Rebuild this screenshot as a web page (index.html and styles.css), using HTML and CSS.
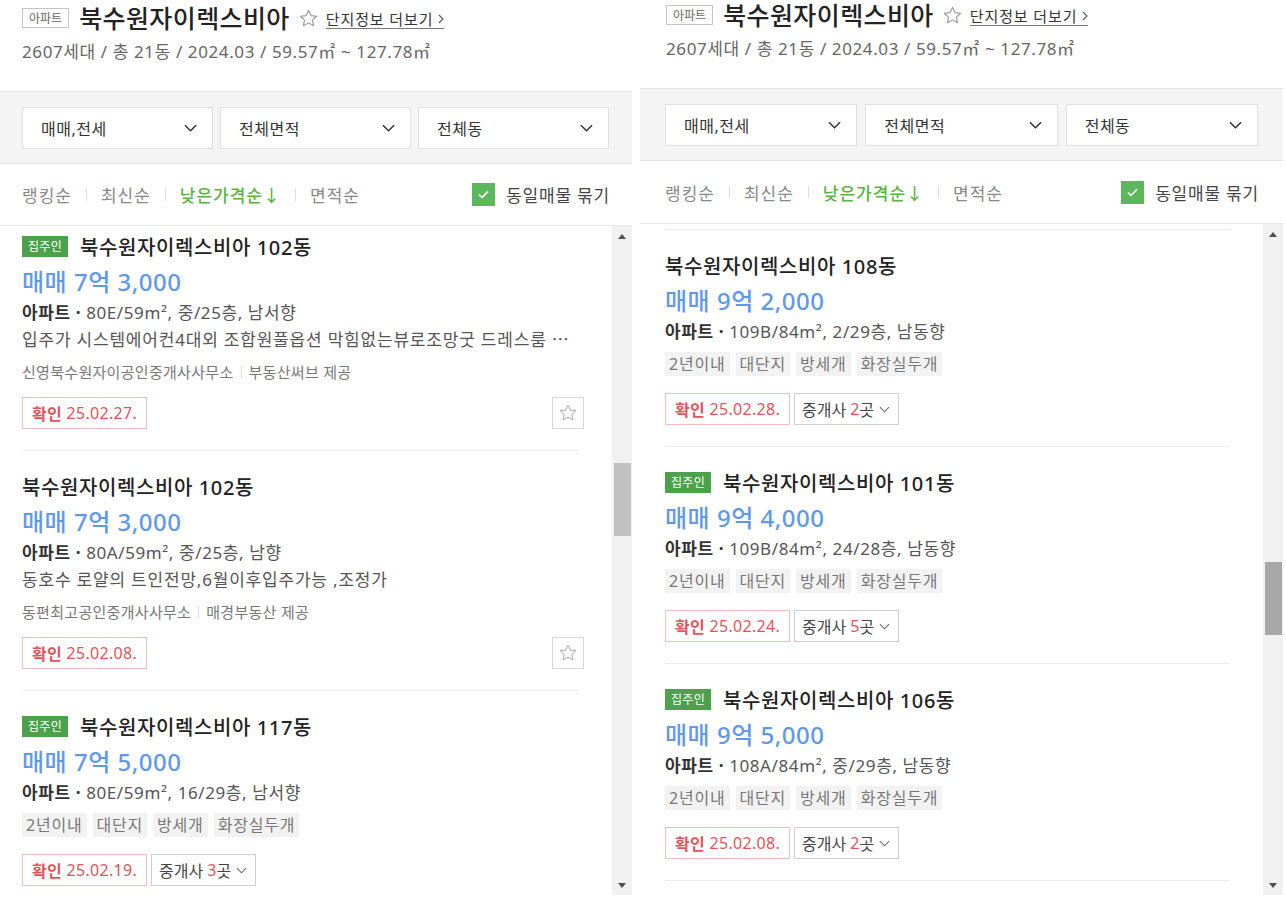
FILE: index.html
```html
<!DOCTYPE html>
<html lang="ko">
<head>
<meta charset="utf-8">
<title>북수원자이렉스비아 매물</title>
<link rel="stylesheet" href="styles.css">
</head>
<body>
<div class="page">

  <section class="panel panel--left">
    <header class="head">
      <div class="head-title">
        <span class="kind">아파트</span>
        <h1 class="name">북수원자이렉스비아</h1>
        <svg class="fav" viewBox="0 0 24 24" width="21" height="21"><polygon points="12,2.8 14.8,8.7 21.3,9.4 16.5,13.8 17.8,20.2 12,17 6.2,20.2 7.5,13.8 2.7,9.4 9.2,8.7" fill="none" stroke="#9a9a9a" stroke-width="1.3" stroke-linejoin="round"/></svg>
        <a class="more" href="#">단지정보 더보기<svg viewBox="0 0 6 10" width="6" height="10"><path d="M1 1l4 4-4 4" fill="none" stroke="#555" stroke-width="1.1"/></svg></a>
      </div>
      <p class="summary">2607세대 / 총 21동 / 2024.03 / 59.57㎡ ~ 127.78㎡</p>
    </header>

    <div class="filters">
      <div class="select"><span>매매,전세</span><svg viewBox="0 0 14 8" width="13" height="8"><path d="M1 1l6 6 6-6" fill="none" stroke="#333" stroke-width="1.6"/></svg></div>
      <div class="select"><span>전체면적</span><svg viewBox="0 0 14 8" width="13" height="8"><path d="M1 1l6 6 6-6" fill="none" stroke="#333" stroke-width="1.6"/></svg></div>
      <div class="select"><span>전체동</span><svg viewBox="0 0 14 8" width="13" height="8"><path d="M1 1l6 6 6-6" fill="none" stroke="#333" stroke-width="1.6"/></svg></div>
    </div>

    <div class="sorts">
      <ul class="sort-list">
        <li>랭킹순</li>
        <li class="sort-sep"></li>
        <li>최신순</li>
        <li class="sort-sep"></li>
        <li class="is-active">낮은가격순↓</li>
        <li class="sort-sep"></li>
        <li>면적순</li>
      </ul>
      <label class="bundle"><span class="check"><svg viewBox="0 0 12 10" width="11" height="9"><path d="M1 5l3.3 3.3L11 1.5" fill="none" stroke="#fff" stroke-width="1.8"/></svg></span>동일매물 묶기</label>
    </div>

    <div class="list-wrap">
      <div class="list">
        <article class="item">
          <div class="item-title"><span class="owner">집주인</span><h2>북수원자이렉스비아 102동</h2></div>
          <div class="price">매매 7억 3,000</div>
          <div class="spec"><strong>아파트 ·</strong> 80E/59m², 중/25층, 남서향</div>
          <p class="desc">입주가 시스템에어컨4대외 조합원풀옵션 막힘없는뷰로조망굿 드레스룸 ⋯</p>
          <div class="agency"><span>신영북수원자이공인중개사사무소</span><span class="agency-sep"></span><span>부동산써브 제공</span></div>
          <div class="item-foot item-foot--agency">
            <span class="confirm"><b>확인</b> 25.02.27.</span>
            <button class="star-btn" type="button"><svg viewBox="0 0 24 24" width="20" height="20"><polygon points="12,2.8 14.8,8.7 21.3,9.4 16.5,13.8 17.8,20.2 12,17 6.2,20.2 7.5,13.8 2.7,9.4 9.2,8.7" fill="none" stroke="#aaa" stroke-width="1.2" stroke-linejoin="round"/></svg></button>
          </div>
        </article>
        <article class="item">
          <div class="item-title"><h2>북수원자이렉스비아 102동</h2></div>
          <div class="price">매매 7억 3,000</div>
          <div class="spec"><strong>아파트 ·</strong> 80A/59m², 중/25층, 남향</div>
          <p class="desc">동호수 로얄의 트인전망,6월이후입주가능 ,조정가</p>
          <div class="agency"><span>동편최고공인중개사사무소</span><span class="agency-sep"></span><span>매경부동산 제공</span></div>
          <div class="item-foot item-foot--agency">
            <span class="confirm"><b>확인</b> 25.02.08.</span>
            <button class="star-btn" type="button"><svg viewBox="0 0 24 24" width="20" height="20"><polygon points="12,2.8 14.8,8.7 21.3,9.4 16.5,13.8 17.8,20.2 12,17 6.2,20.2 7.5,13.8 2.7,9.4 9.2,8.7" fill="none" stroke="#aaa" stroke-width="1.2" stroke-linejoin="round"/></svg></button>
          </div>
        </article>
        <article class="item">
          <div class="item-title"><span class="owner">집주인</span><h2>북수원자이렉스비아 117동</h2></div>
          <div class="price">매매 7억 5,000</div>
          <div class="spec"><strong>아파트 ·</strong> 80E/59m², 16/29층, 남서향</div>
          <ul class="tags"><li>2년이내</li><li>대단지</li><li>방세개</li><li>화장실두개</li></ul>
          <div class="item-foot">
            <span class="confirm"><b>확인</b> 25.02.19.</span>
            <button class="agents" type="button">중개사 <em>3</em>곳<svg viewBox="0 0 12 7" width="11" height="7"><path d="M1 1l5 5 5-5" fill="none" stroke="#666" stroke-width="1.1"/></svg></button>
          </div>
        </article>
      </div>
      <div class="scrollbar">
        <span class="sb-arrow sb-arrow--up"></span>
        <span class="sb-thumb sb-thumb--light" style="top:237px;height:73px"></span>
        <span class="sb-arrow sb-arrow--down"></span>
      </div>
    </div>
  </section>

  <section class="panel panel--right">
    <header class="head">
      <div class="head-title">
        <span class="kind">아파트</span>
        <h1 class="name">북수원자이렉스비아</h1>
        <svg class="fav" viewBox="0 0 24 24" width="21" height="21"><polygon points="12,2.8 14.8,8.7 21.3,9.4 16.5,13.8 17.8,20.2 12,17 6.2,20.2 7.5,13.8 2.7,9.4 9.2,8.7" fill="none" stroke="#9a9a9a" stroke-width="1.3" stroke-linejoin="round"/></svg>
        <a class="more" href="#">단지정보 더보기<svg viewBox="0 0 6 10" width="6" height="10"><path d="M1 1l4 4-4 4" fill="none" stroke="#555" stroke-width="1.1"/></svg></a>
      </div>
      <p class="summary">2607세대 / 총 21동 / 2024.03 / 59.57㎡ ~ 127.78㎡</p>
    </header>

    <div class="filters">
      <div class="select"><span>매매,전세</span><svg viewBox="0 0 14 8" width="13" height="8"><path d="M1 1l6 6 6-6" fill="none" stroke="#333" stroke-width="1.6"/></svg></div>
      <div class="select"><span>전체면적</span><svg viewBox="0 0 14 8" width="13" height="8"><path d="M1 1l6 6 6-6" fill="none" stroke="#333" stroke-width="1.6"/></svg></div>
      <div class="select"><span>전체동</span><svg viewBox="0 0 14 8" width="13" height="8"><path d="M1 1l6 6 6-6" fill="none" stroke="#333" stroke-width="1.6"/></svg></div>
    </div>

    <div class="sorts">
      <ul class="sort-list">
        <li>랭킹순</li>
        <li class="sort-sep"></li>
        <li>최신순</li>
        <li class="sort-sep"></li>
        <li class="is-active">낮은가격순↓</li>
        <li class="sort-sep"></li>
        <li>면적순</li>
      </ul>
      <label class="bundle"><span class="check"><svg viewBox="0 0 12 10" width="11" height="9"><path d="M1 5l3.3 3.3L11 1.5" fill="none" stroke="#fff" stroke-width="1.8"/></svg></span>동일매물 묶기</label>
    </div>

    <div class="list-wrap">
      <div class="list">
        <article class="item">
          <div class="item-title"><h2>북수원자이렉스비아 108동</h2></div>
          <div class="price">매매 9억 2,000</div>
          <div class="spec"><strong>아파트 ·</strong> 109B/84m², 2/29층, 남동향</div>
          <ul class="tags"><li>2년이내</li><li>대단지</li><li>방세개</li><li>화장실두개</li></ul>
          <div class="item-foot">
            <span class="confirm"><b>확인</b> 25.02.28.</span>
            <button class="agents" type="button">중개사 <em>2</em>곳<svg viewBox="0 0 12 7" width="11" height="7"><path d="M1 1l5 5 5-5" fill="none" stroke="#666" stroke-width="1.1"/></svg></button>
          </div>
        </article>
        <article class="item">
          <div class="item-title"><span class="owner">집주인</span><h2>북수원자이렉스비아 101동</h2></div>
          <div class="price">매매 9억 4,000</div>
          <div class="spec"><strong>아파트 ·</strong> 109B/84m², 24/28층, 남동향</div>
          <ul class="tags"><li>2년이내</li><li>대단지</li><li>방세개</li><li>화장실두개</li></ul>
          <div class="item-foot">
            <span class="confirm"><b>확인</b> 25.02.24.</span>
            <button class="agents" type="button">중개사 <em>5</em>곳<svg viewBox="0 0 12 7" width="11" height="7"><path d="M1 1l5 5 5-5" fill="none" stroke="#666" stroke-width="1.1"/></svg></button>
          </div>
        </article>
        <article class="item">
          <div class="item-title"><span class="owner">집주인</span><h2>북수원자이렉스비아 106동</h2></div>
          <div class="price">매매 9억 5,000</div>
          <div class="spec"><strong>아파트 ·</strong> 108A/84m², 중/29층, 남동향</div>
          <ul class="tags"><li>2년이내</li><li>대단지</li><li>방세개</li><li>화장실두개</li></ul>
          <div class="item-foot">
            <span class="confirm"><b>확인</b> 25.02.08.</span>
            <button class="agents" type="button">중개사 <em>2</em>곳<svg viewBox="0 0 12 7" width="11" height="7"><path d="M1 1l5 5 5-5" fill="none" stroke="#666" stroke-width="1.1"/></svg></button>
          </div>
        </article>
      </div>
      <div class="scrollbar">
        <span class="sb-arrow sb-arrow--up"></span>
        <span class="sb-thumb" style="top:338px;height:73px"></span>
        <span class="sb-arrow sb-arrow--down"></span>
      </div>
    </div>
  </section>

</div>
</body>
</html>
```

FILE: styles.css
```css
* { box-sizing: border-box; }

html, body {
  margin: 0;
  padding: 0;
  background: #fff;
}

body {
  font-family: "Noto Sans", "Noto Sans CJK KR", sans-serif;
  color: #333;
  width: 1286px;
  height: 900px;
  overflow: hidden;
}

h1, h2, p, ul { margin: 0; padding: 0; }
ul { list-style: none; }

.page {
  display: flex;
  gap: 8px;
  align-items: flex-start;
}

.panel {
  display: flex;
  flex-direction: column;
  height: 895px;
}

.panel--left { width: 632px; }
.panel--right { width: 643px; }

/* ---------- header ---------- */
.head {
  padding: 4px 22px 27px;
}
.panel--right .head {
  padding: 1px 25px 27px 26px;
}

.head-title {
  display: flex;
  align-items: center;
  height: 28px;
}

.kind {
  display: inline-flex;
  align-items: center;
  height: 20px;
  padding: 0 6px;
  border: 1px solid #c4c4c4;
  font-size: 12px;
  color: #666;
  margin-right: 10px;
}

.name {
  font-size: 25px;
  font-weight: 500;
  color: #222;
  letter-spacing: 0.4px;
  line-height: 28px;
}

.fav {
  margin: 0 7px 0 8px;
}

.more {
  display: inline-flex;
  align-items: center;
  gap: 5px;
  font-size: 15px;
  color: #333;
  text-decoration: none;
  border-bottom: 1px solid #777;
  line-height: 18px;
  letter-spacing: 0.9px;
  margin-top: 2px;
}

.summary {
  margin-top: 8px;
  font-size: 17px;
  line-height: 24px;
  color: #666;
  letter-spacing: 0.6px;
}

/* ---------- filters ---------- */
.filters {
  display: grid;
  grid-template-columns: repeat(3, 1fr);
  gap: 7px;
  padding: 15px 23px 14px 22px;
  background: #f4f4f4;
  border-top: 1px solid #e4e4e4;
  border-bottom: 1px solid #e4e4e4;
}
.panel--right .filters {
  gap: 8px;
  padding: 15px 25px 14px 25px;
}

.select {
  height: 42px;
  background: #fff;
  border: 1px solid #e0e0e0;
  display: flex;
  align-items: center;
  justify-content: space-between;
  padding: 0 15px 0 18px;
  font-size: 16px;
  color: #333;
  letter-spacing: 0.5px;
}

/* ---------- sort row ---------- */
.sorts {
  height: 62px;
  display: flex;
  align-items: center;
  justify-content: space-between;
  padding: 0 22px;
  border-bottom: 1px solid #e6e6e6;
}
.panel--right .sorts {
  height: 63px;
  padding: 0 24px 0 25px;
}

.sort-list {
  display: flex;
  align-items: center;
  gap: 14px;
  font-size: 17px;
  color: #888;
  letter-spacing: 1px;
}

.sort-list .is-active {
  color: #57b43f;
  font-weight: 500;
}

.sort-sep {
  width: 1px;
  height: 12px;
  background: #ddd;
}

.bundle {
  display: flex;
  align-items: center;
  gap: 11px;
  font-size: 17px;
  color: #444;
  letter-spacing: 0.8px;
}

.check {
  width: 23px;
  height: 23px;
  background: #5cb85c;
  display: inline-flex;
  align-items: center;
  justify-content: center;
}

/* ---------- list ---------- */
.list-wrap {
  flex: 1;
  min-height: 0;
  display: flex;
}

.list {
  flex: 1;
  min-width: 0;
  overflow: hidden;
  padding: 0 32px 0 22px;
}
.panel--right .list {
  padding: 5px 33px 0 25px;
}
.panel--right .list .item:first-child {
  border-top: 1px solid #ececec;
}

.item {
  padding: 22px 0 21px;
  border-bottom: 1px solid #ececec;
}
.panel--left .item:first-child {
  padding-top: 7px;
}

.item-title {
  display: flex;
  align-items: center;
  height: 26px;
}

.owner {
  display: inline-flex;
  align-items: center;
  height: 21px;
  padding: 0 6px;
  background: #4ba24a;
  color: #fff;
  font-size: 12px;
  letter-spacing: 0.3px;
  margin-right: 12px;
}

.item-title h2 {
  font-size: 20px;
  font-weight: 500;
  color: #222;
  letter-spacing: 0.6px;
}

.price {
  margin-top: 5px;
  font-size: 24px;
  line-height: 36px;
  color: #6198ef;
  font-weight: 500;
  letter-spacing: 0.5px;
}

.spec {
  font-size: 17px;
  line-height: 26px;
  color: #555;
  letter-spacing: 0.6px;
}
.spec strong {
  color: #333;
  font-weight: 700;
}

.desc {
  font-size: 17px;
  line-height: 28px;
  color: #555;
  letter-spacing: 0.8px;
  white-space: nowrap;
  overflow: hidden;
}

.agency {
  margin-top: 4px;
  display: flex;
  align-items: center;
  gap: 7px;
  font-size: 15px;
  line-height: 28px;
  color: #777;
  letter-spacing: 0.3px;
}

.agency-sep {
  width: 1px;
  height: 12px;
  background: #ddd;
}

.tags {
  margin-top: 7px;
  display: flex;
  gap: 6px;
}
.tags li {
  height: 24px;
  line-height: 24px;
  padding: 0 4px;
  background: #f2f2f2;
  font-size: 16px;
  color: #777;
  letter-spacing: 0.8px;
}

.item-foot {
  margin-top: 17px;
  display: flex;
  align-items: center;
  gap: 4px;
}
.item-foot--agency {
  margin-top: 11px;
  justify-content: space-between;
}

.confirm {
  display: inline-flex;
  align-items: center;
  height: 32px;
  padding: 0 9px;
  border: 1px solid #f1bcbc;
  font-size: 16px;
  color: #e4535b;
  letter-spacing: 0.3px;
  white-space: pre;
}
.confirm b { font-weight: 700; }

.star-btn {
  width: 32px;
  height: 32px;
  border: 1px solid #d6d6d6;
  background: #fff;
  padding: 0;
  display: inline-flex;
  align-items: center;
  justify-content: center;
  margin-right: -4px;
}

.agents {
  display: inline-flex;
  align-items: center;
  height: 32px;
  padding: 0 8px 0 7px;
  border: 1px solid #cfcfcf;
  background: #fff;
  font-family: inherit;
  font-size: 16px;
  color: #444;
  white-space: pre;
}
.agents em {
  font-style: normal;
  color: #e4535b;
}
.agents svg { margin-left: 5px; }

/* ---------- scrollbar ---------- */
.scrollbar {
  position: relative;
  width: 20px;
  background: #f1f1f1;
}

.sb-arrow {
  position: absolute;
  left: 6px;
  width: 0;
  height: 0;
  border-left: 4px solid transparent;
  border-right: 4px solid transparent;
}
.sb-arrow--up {
  top: 8px;
  border-bottom: 5px solid #505050;
}
.sb-arrow--down {
  bottom: 7px;
  border-top: 5px solid #505050;
}

.sb-thumb {
  position: absolute;
  left: 2px;
  right: 1px;
  background: #a8a8a8;
}
.sb-thumb--light {
  background: #c1c1c1;
}
```
